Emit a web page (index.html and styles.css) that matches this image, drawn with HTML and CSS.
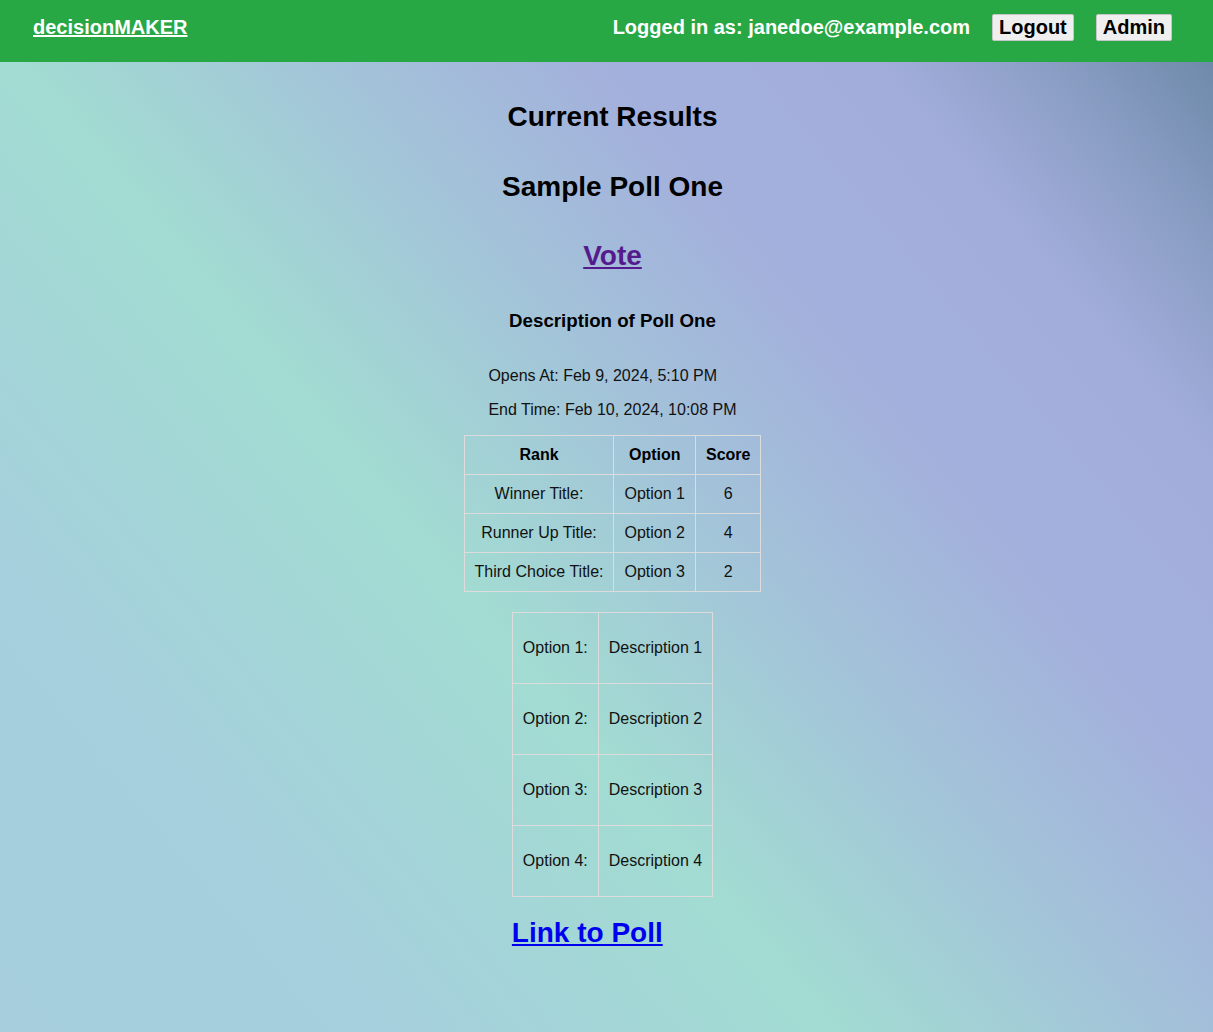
FILE: index.html
```html
<!DOCTYPE html>
<html lang="en">
<head>
<meta charset="utf-8">
<title>decisionMAKER</title>
<link rel="stylesheet" href="styles.css">
</head>
<body>
<header class="topbar">
  <a class="brand" href="#">decisionMAKER</a>
  <div class="user">
    <span class="user-label">Logged in as: janedoe@example.com</span>
    <button class="btn" type="button">Logout</button>
    <button class="btn" type="button">Admin</button>
  </div>
</header>
<main class="main">
  <h2 class="title">Current Results</h2>
  <h2 class="poll-name">Sample Poll One</h2>
  <h2 class="vote"><a class="vote-link" href="#">Vote</a></h2>
  <h3 class="desc">Description of Poll One</h3>
  <div class="times">
    <p class="time opens">Opens At: Feb 9, 2024, 5:10 PM</p>
    <p class="time ends">End Time: Feb 10, 2024, 10:08 PM</p>
  </div>
  <table class="results">
    <thead>
      <tr><th>Rank</th><th>Option</th><th>Score</th></tr>
    </thead>
    <tbody>
      <tr><td>Winner Title:</td><td>Option 1</td><td>6</td></tr>
      <tr><td>Runner Up Title:</td><td>Option 2</td><td>4</td></tr>
      <tr><td>Third Choice Title:</td><td>Option 3</td><td>2</td></tr>
    </tbody>
  </table>
  <div class="options-wrap">
    <table class="options">
      <tr><td>Option 1:</td><td>Description 1</td></tr>
      <tr><td>Option 2:</td><td>Description 2</td></tr>
      <tr><td>Option 3:</td><td>Description 3</td></tr>
      <tr><td>Option 4:</td><td>Description 4</td></tr>
    </table>
    <a class="poll-link" href="#">Link to Poll</a>
  </div>
</main>
</body>
</html>
```

FILE: styles.css
```css
html, body {
  margin: 0;
  padding: 0;
}

body {
  min-height: 100vh;
  font-family: "Liberation Sans", Arial, sans-serif;
  color: #000;
  background: linear-gradient(50deg,
    #a6cedd 0%,
    #a5d0dc 20%,
    #a2dcd2 40%,
    #a3c2d9 56%,
    #a3b0dc 68%,
    #a3addc 81%,
    #899dc3 90%,
    #6584a2 100%);
  background-attachment: fixed;
}

.topbar {
  box-sizing: border-box;
  height: 62px;
  padding: 14px 41px 0 33px;
  background: #28a745;
  display: flex;
  align-items: baseline;
  justify-content: space-between;
}

.brand {
  color: #fff;
  font-weight: bold;
  font-size: 20px;
  text-decoration: underline;
}

.user {
  display: flex;
  align-items: baseline;
  gap: 22px;
  color: #fff;
  font-weight: bold;
  font-size: 20px;
}

.btn {
  font-family: "Liberation Sans", Arial, sans-serif;
  font-weight: bold;
  font-size: 20px;
  line-height: 23px;
  color: #000;
  background: #efefef;
  border: 1px solid #c6c6c6;
  border-radius: 2px;
  padding: 1px 6px;
  margin: 0;
}

.main {
  padding: 39px 0 40px 12px;
  text-align: center;
}

.title,
.poll-name,
.vote {
  font-size: 28px;
  font-weight: bold;
  margin: 0;
}

.poll-name {
  margin-top: 38px;
}

.vote {
  margin-top: 37px;
}

.vote-link {
  color: #551a8b;
  text-decoration: underline;
}

.desc {
  font-size: 18.72px;
  font-weight: bold;
  margin: 38px 0 0;
}

.times {
  display: inline-block;
  text-align: left;
  margin-top: 35px;
}

.time {
  margin: 0;
  font-size: 16px;
  color: #111;
}

.ends {
  margin-top: 16px;
}

.results {
  margin: 16px auto 0;
  border-collapse: collapse;
  font-size: 16px;
  line-height: 18px;
  color: #111;
}

.results th,
.results td {
  border: 1px solid #dcdcdc;
  padding: 10px;
  text-align: center;
}

.results th {
  font-weight: bold;
  color: #000;
}

.options-wrap {
  display: inline-block;
  text-align: left;
  margin-top: 20px;
}

.options {
  border-collapse: collapse;
  font-size: 16px;
  line-height: 18px;
  color: #111;
}

.options td {
  border: 1px solid #dcdcdc;
  padding: 26px 10px;
  text-align: center;
}

.poll-link {
  display: inline-block;
  margin-top: 20px;
  font-size: 28px;
  font-weight: bold;
  color: #0000ee;
  text-decoration: underline;
}
```
